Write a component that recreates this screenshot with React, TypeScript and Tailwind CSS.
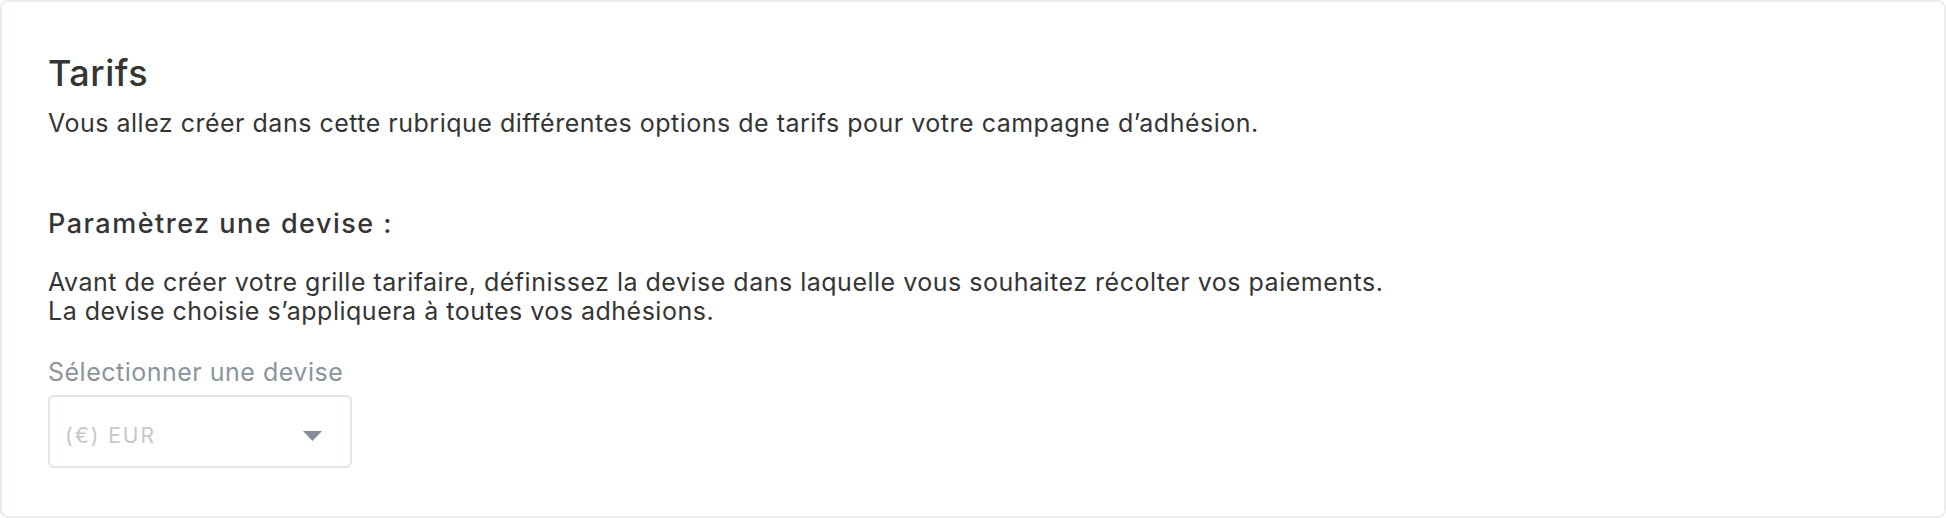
import React from "react";

export default function App() {
  return (
    <div className="w-[1946px] h-[518px] bg-white" style={{ fontFamily: "Inter, 'Noto Sans', sans-serif" }}>
      <div className="h-[518px] rounded-[8px] border-2 border-[#e9edf1] bg-white pl-[46px] pt-[49px] text-[#353535]">
        <h1 className="text-[36px] leading-[44px] font-medium tracking-[0.5px]">Tarifs</h1>
        <p className="mt-[14px] text-[25px] leading-[29px] tracking-[0.5px]">
          Vous allez créer dans cette rubrique différentes options de tarifs pour votre campagne d’adhésion.
        </p>
        <h2 className="mt-[69px] text-[27px] leading-[34px] font-medium tracking-[1.5px]">Paramètrez une devise :</h2>
        <p className="mt-[27px] text-[25px] leading-[29px] tracking-[0.5px]">
          Avant de créer votre grille tarifaire, définissez la devise dans laquelle vous souhaitez récolter vos paiements.
          <br />
          La devise choisie s’appliquera à toutes vos adhésions.
        </p>
        <div className="mt-[32px] text-[25px] leading-[29px] text-[#8c939b] tracking-[0.5px]">Sélectionner une devise</div>
        <div className="mt-[8px] flex h-[73px] w-[304px] items-center justify-between rounded-[6px] border-2 border-[#e1e5ea] pl-[15px] pr-[28px] pt-[8px]">
          <span className="text-[21px] leading-[31px] text-[#c3c8ce] tracking-[2px]">(€) EUR</span>
          <svg width="19" height="10" viewBox="0 0 19 10">
            <path d="M0 0 L19 0 L9.5 10 Z" fill="#868d96" />
          </svg>
        </div>
      </div>
    </div>
  );
}
